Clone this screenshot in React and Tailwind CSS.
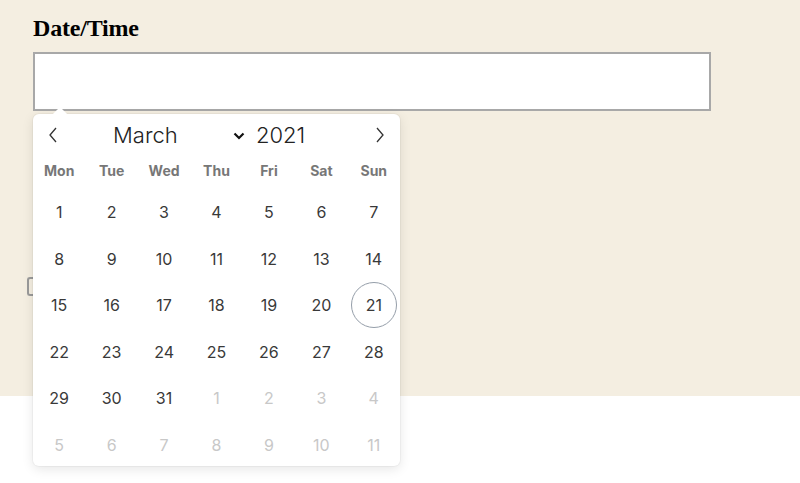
const weekdays = ['Mon', 'Tue', 'Wed', 'Thu', 'Fri', 'Sat', 'Sun'];

const days = [
  ...Array.from({ length: 31 }, (_, i) => ({ n: i + 1, cur: true })),
  ...Array.from({ length: 11 }, (_, i) => ({ n: i + 1, cur: false })),
];

function Chevron({ dir }) {
  return (
    <svg width="10" height="16" viewBox="0 0 10 16" fill="none" stroke="#333" strokeWidth="1.3">
      {dir === 'left' ? <path d="M8 1L2 8l6 7" /> : <path d="M2 1l6 7-6 7" />}
    </svg>
  );
}

export default function App() {
  return (
    <div className="relative w-[800px] h-[483px] bg-white overflow-hidden" style={{ fontFamily: 'Inter, "Noto Sans", sans-serif' }}>
      <div className="h-[396px] bg-[#f4eee1] pl-[33px] pt-[13px]">
        <h2 className="text-[24px] font-bold text-black leading-[30px] mb-[9px] tracking-[-0.2px]" style={{ fontFamily: '"Liberation Serif", serif' }}>
          Date/Time
        </h2>
        <input type="text" className="block w-[678px] h-[59px] bg-white border-2 border-[#a8a8a8] outline-none" />
        <div className="mt-[166px] -ml-[6px] w-[10px] h-[19px] border-2 border-r-0 border-[#9a9a9a] rounded-l-[3px]" />
      </div>

      <div className="absolute left-[33px] top-[114px] w-[367px] h-[352px] bg-white rounded-[6px] shadow-[0_3px_12px_rgba(0,0,0,0.1),0_0_0_1px_rgba(0,0,0,0.03)] text-[#393939]">
        <div className="absolute -top-[5px] left-[22px] w-[10px] h-[10px] bg-white rotate-45" />
        <div className="relative flex items-center h-[42px] px-[15px]">
          <Chevron dir="left" />
          <div className="flex items-center ml-[55px] text-[22px] font-light text-[#222]">
            <span className="w-[120px]">March</span>
            <svg width="12" height="8" viewBox="0 0 12 8" fill="none" stroke="#111" strokeWidth="2.2" className="mt-[1px]">
              <path d="M1.5 1.5L6 6l4.5-4.5" />
            </svg>
            <span className="ml-[11px]">2021</span>
          </div>
          <div className="ml-auto">
            <Chevron dir="right" />
          </div>
        </div>
        <div className="grid grid-cols-7 h-[29px] mb-[4px] items-center">
          {weekdays.map((d) => (
            <div key={d} className="text-center text-[14px] font-bold text-[#777]">{d}</div>
          ))}
        </div>
        <div className="grid grid-cols-7">
          {days.map((d, i) => (
            <div key={i} className="h-[46.5px] flex items-center justify-center">
              <span
                className={`flex items-center justify-center w-[46px] h-[46px] rounded-full text-[16px] ${
                  d.cur ? 'text-[#393939]' : 'text-[#c8c8c8]'
                } ${d.cur && d.n === 21 ? 'border border-[#959ea9]' : ''}`}
              >
                {d.n}
              </span>
            </div>
          ))}
        </div>
      </div>
    </div>
  );
}
